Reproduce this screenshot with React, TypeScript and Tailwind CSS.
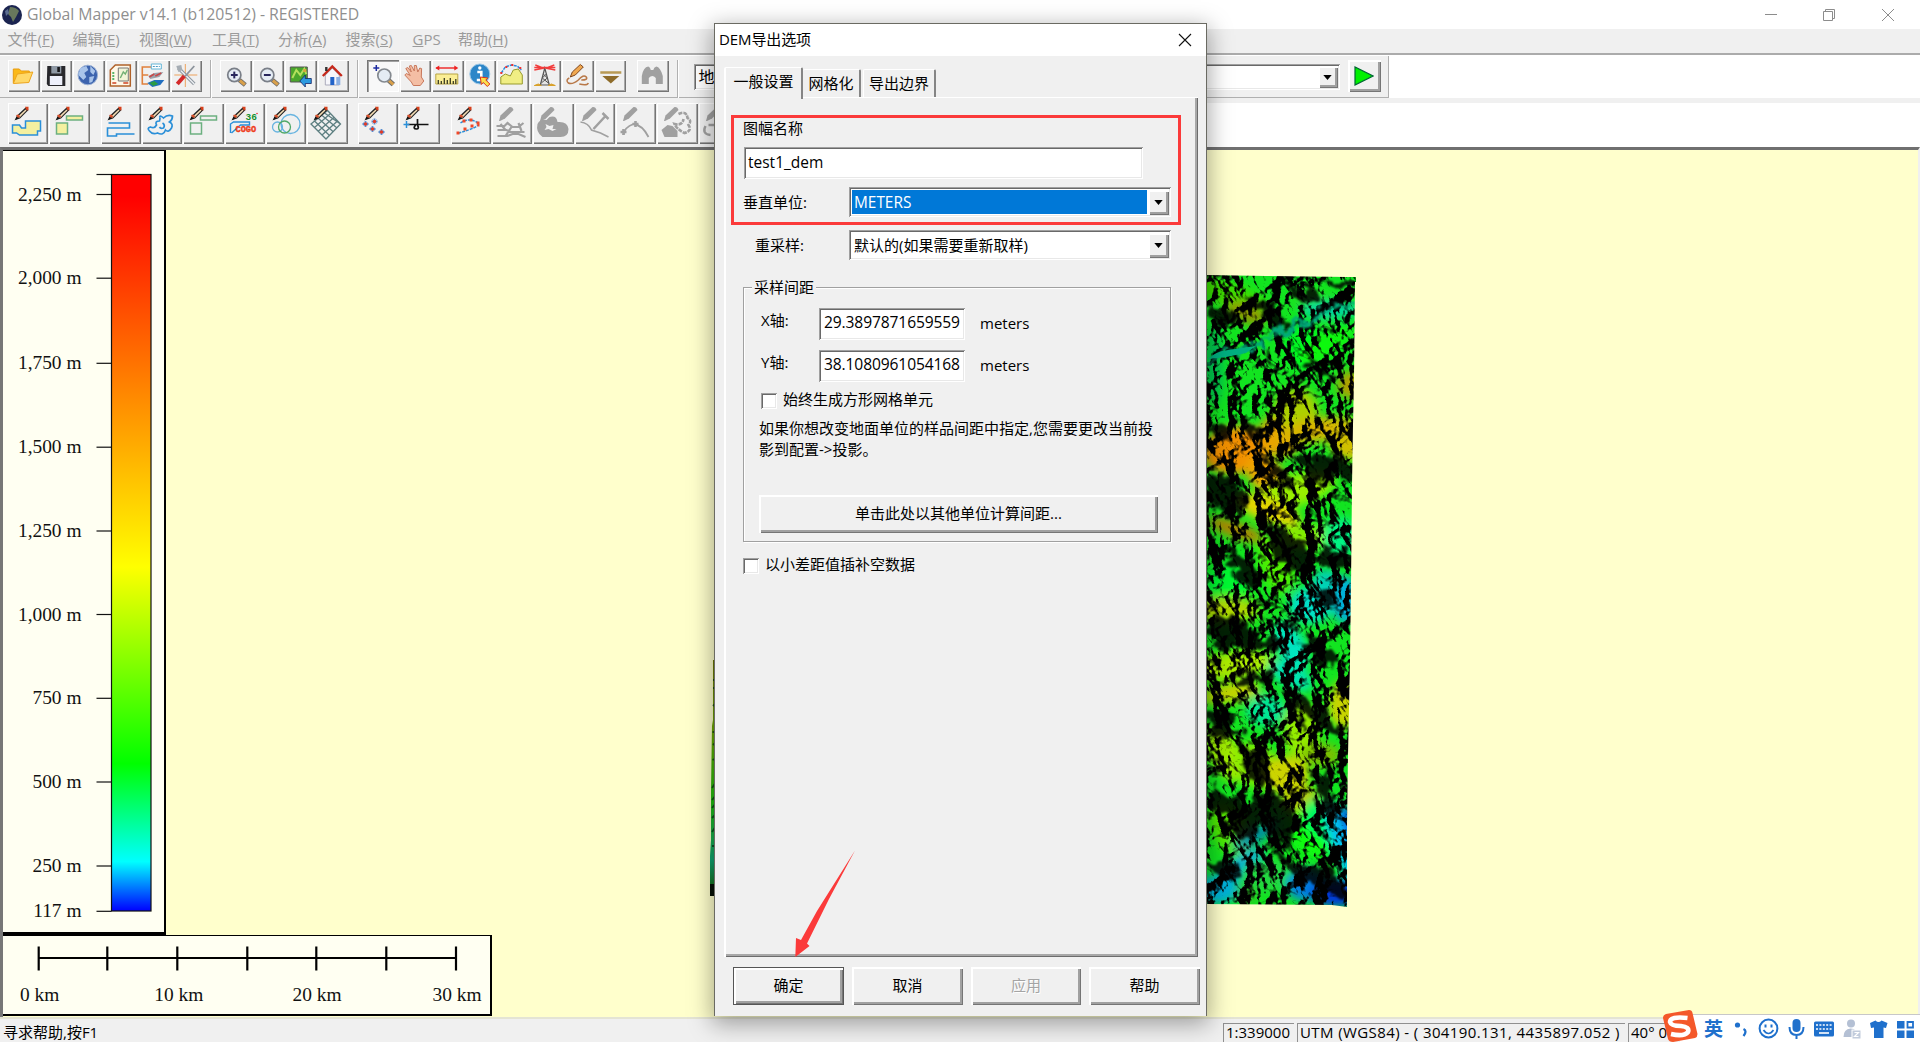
import React from "react";

const UI = "font-['Open_Sans','Noto_Sans_CJK_SC',sans-serif]";
const BTN =
  "bg-[#f0f0f0] shadow-[inset_2px_2px_0_#fff,inset_-1px_-1px_0_#757575,inset_-3px_-3px_0_#a0a0a0]";
const SUNK =
  "bg-white shadow-[inset_1px_1px_0_#a0a0a0,inset_-1px_-1px_0_#fff,inset_2px_2px_0_#696969,inset_-2px_-2px_0_#e8e8e8]";

function Tool({ children, pressed }: { children: React.ReactNode; pressed?: boolean }) {
  return (
    <div
      className={
        pressed
          ? "h-8 w-[31.5px] shrink-0 bg-[#f8f8f8] shadow-[inset_1px_1px_0_#757575,inset_2px_2px_0_#a0a0a0,inset_-1px_-1px_0_#fff]"
          : "h-8 w-[31.5px] shrink-0 bg-[#f0f0f0] shadow-[inset_1px_1px_0_#fff,inset_-1px_-1px_0_#757575,inset_-2px_-2px_0_#a8a8a8]"
      }
    >
      <svg viewBox="0.700 0 32 32" className="block h-8 w-8" fill="none">
        {children}
      </svg>
    </div>
  );
}

function Draw({ children }: { children: React.ReactNode }) {
  return (
    <div className="h-[41px] w-[40.4px] shrink-0 bg-[#f0f0f0] shadow-[inset_1px_1px_0_#fff,inset_-1px_-1px_0_#757575,inset_-2px_-2px_0_#a8a8a8]">
      <svg viewBox="0.500 0 41 41" className="block h-[41px] w-[41px]" fill="none">
        {children}
      </svg>
    </div>
  );
}

const Pencil = () => (
  <g>
    <path d="M8 17 L9.5 12.5 L18 4.5 L21 7 L12.5 15.5 Z" fill="#222" />
    <path d="M10.5 13.5 L18 6.5 L19 7.5 L11.8 14.7 Z" fill="#f4dcb4" />
    <path d="M17.5 3.8 h3.5 v3.5 h-2 z" fill="#d6401c" />
    <path d="M8.6 12 l2.6 -.6 l1.6 2.6 l-2.8 1z" fill="#d6502c" />
    <path d="M7 17.5 L9 13.5 L10.8 15.2Z" fill="#111" />
  </g>
);
const GrayPencil = () => (
  <path d="M7.5 18 L9 12.5 L18 4 Q21 3.5 22 7 L13.5 15.5 L8.5 18Z" fill="#a0a0a0" />
);

function Lens({ sign }: { sign: string }) {
  return (
    <>
      <path d="M20 20 L26 25" stroke="#6b6b6b" strokeWidth="4.6" />
      <path d="M20.5 20.5 L25.5 24.6" stroke="#d9a04a" strokeWidth="3" />
      <circle cx="15" cy="15" r="6.6" fill="#e4ecf4" stroke="#7a7f88" strokeWidth="1.7" />
      <path d="M11.6 15 h6.8" stroke="#26265c" strokeWidth="2" />
      {sign === "+" && <path d="M15 11.6 v6.8" stroke="#26265c" strokeWidth="2" />}
    </>
  );
}

function Toolbar() {
  return (
    <div className="flex h-[42px] w-[1389px] border-b border-r border-[#b0b0b0] bg-[#f0f0f0] pt-[4px]">
      <div className="flex gap-[1px] pl-2">
        <Tool>
          <path d="M6 23 V9 h6 l2 2 h8 v3" fill="#fbb917" stroke="#e79b10" />
          <path d="M6 23.5 L10 14 L25.5 12 L21.5 22.5Z" fill="#ffd868" stroke="#eda41c" />
        </Tool>
        <Tool>
          <path d="M7 6 h18 v20 h-17 l-1.5 -2z" fill="#28282c" />
          <path d="M11 6 h10 v7.5 h-10z" fill="#8e98a4" />
          <path d="M17 7 h2.6 v5 h-2.6z" fill="#16161a" />
          <path d="M9.5 16 h12.5 v9 h-12.5z" fill="#eef0fb" />
        </Tool>
        <Tool>
          <circle cx="15.5" cy="15" r="9.8" fill="#3c63ae" stroke="#9ab0d4" />
          <path d="M8 8 l6 -2 l2 4 l-4 3 l2 4 l-3 3 l-5 -5z M18 6 l5 5 l-2 4 l-3 -3z M17 17 l5 -1 l-2 6 l-3 1z" fill="#a9c4ea" />
        </Tool>
        <Tool>
          <path d="M5 10 L10 5 H25 V26 H5Z" fill="#fff8e8" stroke="#b0622a" strokeWidth="1.5" />
          <path d="M13 8 h10 v13 h-10z" fill="#f2f5d8" stroke="#777" />
          <path d="M15 18 l3 -6 l2 2 l2 -4" stroke="#73b074" strokeWidth="1.4" />
          <path d="M7 13 h2 M7 16 h2 M7 19 h2" stroke="#22a040" strokeWidth="1.6" />
          <path d="M7 23 h4 M18 23 h5" stroke="#cf4020" strokeWidth="1.3" />
        </Tool>
        <Tool>
          <path d="M16 7 H5 V24 H11 M5 15 H11" stroke="#e0803c" strokeWidth="1.6" />
          <path d="M14 4 h10 v5 h-10z" fill="#fff" stroke="#63b6d8" />
          <path d="M15.500 6.500 h7" stroke="#4a9ac4" strokeDasharray="2 1" />
          <path d="M11 16 l6 -3 l9 -1 l-4 5 l-9 2z" fill="#9aa4ac" />
          <path d="M12 17 l5 -3 M18 16 l6 -3" stroke="#c84848" strokeWidth="1.6" />
          <path d="M10 23 l7 -3 l10 0 l-4 5 l-8 2z" fill="#216fc0" />
          <path d="M12 23 l5 -2 l4 3 l-5 2z" fill="#2c9c44" />
        </Tool>
        <Tool>
          <path d="M15 4 v23 M4 15 h23" stroke="#eda25c" />
          <path d="M8 8 L24 24" stroke="#8f979f" strokeWidth="3.4" />
          <path d="M9 9 L24 24" stroke="#eef1f4" strokeWidth="1.3" />
          <path d="M24 6 L15 16" stroke="#8d949c" strokeWidth="1.8" />
          <path d="M14 16 L7 24" stroke="#d42a2a" strokeWidth="4" />
          <path d="M6 6 l5 -1 l1 5 l-4 2z" fill="#a6adb4" />
        </Tool>
      </div>
      <div className="ml-[8px] h-[38px] w-[2px] border-l border-[#b0b0b0] bg-white" />
      <div className="flex gap-[1px] pl-[8px]">
        <Tool><Lens sign="+" /></Tool>
        <Tool><Lens sign="-" /></Tool>
        <Tool>
          <path d="M6 7 h17 v15 h-17z" fill="#4aa62c" stroke="#555" />
          <path d="M8 18 l4 -8 l4 5 l4 -6 l2 5" stroke="#b4e05c" strokeWidth="2" />
          <path d="M19 9 h3 v3 h-3z" fill="#d8a43c" />
          <path d="M15.500 21 L21 15 V18.500 H27 V23.500 H21 V27Z" fill="#2c9ae0" stroke="#126" strokeWidth=".8" />
        </Tool>
        <Tool>
          <path d="M8 15 v10 h14 v-10 l-7 -7z" fill="#f6f6fb" stroke="#aab" />
          <path d="M13 17 h4 v8 h-4z" fill="#2263c8" />
          <path d="M5.500 16 L15 6.500 L24.500 16" stroke="#c5291c" strokeWidth="2.4" />
          <path d="M9 7 v4" stroke="#333" strokeWidth="2.400" />
          <path d="M19 17 v8 h4 v-8z" fill="#8cb0e4" />
        </Tool>
      </div>
      <div className="ml-[8px] h-[38px] w-[2px] border-l border-[#b0b0b0] bg-white" />
      <div className="flex gap-[1px] pl-[8px]">
        <Tool pressed>
          <path d="M22 20 L27 24.500" stroke="#6b6b6b" strokeWidth="5" />
          <path d="M22 20 L27 24.500" stroke="#d9a04a" strokeWidth="3" />
          <circle cx="18" cy="15.500" r="6.500" fill="#e4ecf4" stroke="#84898f" strokeWidth="1.700" />
          <path d="M7 8 h6 M10 5 v6" stroke="#1c2aa0" strokeWidth="1.500" />
        </Tool>
        <Tool>
          <path d="M12 22 L5.500 15 l1.500 -1.500 l4 2 L6.500 8.500 l2 -1 L12 12 L10 6 l2 -.5 L15 11 V5.500 l2 0 L18.500 12 l2 -4 l1.800 .6 L22 17 l2.500 4 L21 25.500 h-7z" fill="#f4bea4" stroke="#c8785c" />
        </Tool>
        <Tool>
          <path d="M5 8 h20" stroke="#ee2222" strokeWidth="1.400" />
          <path d="M4 8 l4 -2.500 v5z M27 8 l-4 -2.500 v5z" fill="#e22" />
          <path d="M4.500 14 h22 v10 h-22z" fill="#fbee94" stroke="#b8a444" />
          <path d="M7 24 v-4 M10 24 v-3 M13 24 v-6 M16 24 v-4 M19 24 v-6 M22 24 v-3 M24.500 24 v-5" stroke="#3a3a22" strokeWidth="1.300" />
        </Tool>
        <Tool>
          <circle cx="15.500" cy="14" r="10" fill="#2d86c8" stroke="#9ac6e6" />
          <path d="M13 12 h4 v8 M12.500 20 h5" stroke="#fff" strokeWidth="2.600" />
          <circle cx="15.500" cy="8" r="1.700" fill="#fff" />
          <path d="M16 17 l7.500 1 l-2 2 l4 4 l-2.500 2.500 l-4 -4 l-2 2z" fill="#fbe04c" stroke="#e03018" />
        </Tool>
        <Tool>
          <path d="M4.500 24 V17 L9 14 L14 16 L17 10 L22 9 L26 15 V24Z" fill="#f0ee84" stroke="#989a2c" />
          <path d="M5 13 L9 7 L15 5 L21 6 L25 10" stroke="#2a8ce0" strokeWidth="1.500" strokeDasharray="3 1" />
          <path d="M4 13 h2 M9 7 h2 M15 5 h2 M23 8 h2" stroke="#e33" strokeWidth="2" />
        </Tool>
        <Tool>
          <path d="M15.500 8 L11 25 H20Z" fill="#e4e4e4" stroke="#555" strokeWidth="1.200" />
          <path d="M14 14 l4 4 l-6 5 M17 14 l-4 4 l6 5" stroke="#555" />
          <path d="M6 5 l9 3.500 M5 10 l10 -2 M25 5 l-9 3.500 M26 10 l-10 -2 M5 7.500 h21" stroke="#f23c3c" strokeWidth="1.400" />
          <path d="M5 25.500 l4 -1.500 l3 1.500z M19 25.500 l3 -1.500 l4 1.500z" fill="#d8a028" stroke="#d8a028" />
        </Tool>
        <Tool>
          <path d="M9 17 L11 12 L19 4.500 L22 7 L14 15Z" fill="#f0a850" stroke="#804820" />
          <path d="M8 18 Q4 20 7 23 Q11 25 17 20 Q22 14 25 17 Q27 20 20 20 M18 24 Q26 26 27 23" stroke="#b87848" strokeWidth="1.500" />
        </Tool>
        <Tool>
          <path d="M6 12.500 h21" stroke="#b89a54" strokeWidth="2.500" />
          <path d="M8 16 h17 L16.500 23.500Z" fill="#8e6c2a" />
        </Tool>
      </div>
      <div className="pl-[11px]">
        <Tool>
          <path d="M5.500 24 V16 Q7 7 12 6.500 Q14 7 14.500 10 H17 Q17.500 7 20 6.500 Q24 7 26.500 16 V24 H19.500 V18 Q16 14 12.500 18 V24Z" fill="#a0a0a0" />
        </Tool>
      </div>
      <div className="ml-[8px] h-[38px] w-[2px] border-l border-[#b0b0b0] bg-white" />
      <div className={"ml-[15px] mt-[4px] flex h-[26px] w-[646px] items-center justify-between p-[2px] " + SUNK}>
        <span className={"pl-[3px] text-[16px] leading-none " + UI}>地图</span>
        <div className={"flex h-[22px] w-[20px] items-center justify-center " + BTN}>
          <svg viewBox="0 0 10 6" className="h-[5px] w-[9px]"><path d="M0 0H10L5 6Z" fill="#000" /></svg>
        </div>
      </div>
      <div className={"ml-[8px] flex h-8 w-[33px] items-center justify-center " + BTN}>
        <svg viewBox="0 0 20 20" className="mt-[-1px] h-5 w-5">
          <path d="M1 1 V19 L19 10Z" fill="#00f000" stroke="#063" strokeWidth="1.2" />
        </svg>
      </div>
    </div>
  );
}

const BLUE = "#2a8fd8";
const NODES = [[8, 21], [17, 18.5], [15, 26], [24, 29]];
function DrawBar() {
  return (
    <div className="flex h-[49px] bg-[#f0f0f0] pt-[5px]">
      <div className="flex w-[92.500px] shrink-0 gap-[1px] pl-2">
        <Draw>
          <path d="M5 22 h7 l2 3 h4 v-7 h15 v10 h-3 v4 h-18 l-3 -2 h-4z" fill="#f4f0a0" stroke={BLUE} strokeWidth="1.500" />
          <Pencil />
        </Draw>
        <Draw>
          <path d="M18 13 h16 v4 h-16z M8 20 h11 v11 h-11z" fill="#f4f0a0" stroke="#6cb080" strokeWidth="1.500" />
          <Pencil />
        </Draw>
      </div>
      <div className="flex w-[257.500px] shrink-0 gap-[1px] pl-2">
        <Draw>
          <path d="M8 20 h21 v5 h-22 v8 h9 v-2 h18" stroke={BLUE} strokeWidth="1.600" />
          <Pencil />
        </Draw>
        <Draw>
          <path d="M18 14 q1 -2 4 1 q4 -4 9 -2 q0 4 -3 6 q4 2 2 6 q-3 5 -6 2 q-2 6 -8 3 q-5 2 -8 -2 q-3 -3 1 -4 q4 2 6 -2 q-2 -4 3 -4 q1 -3 0 -4 M21 20 q3 2 1 5 q-3 1 -4 -1" stroke={BLUE} strokeWidth="1.700" />
          <Pencil />
        </Draw>
        <Draw>
          <path d="M18 13 h16 v4 h-16z M8 20 h11 v11 h-11z" stroke="#6cb080" strokeWidth="1.500" />
          <Pencil />
        </Draw>
        <Draw>
          <path d="M6 30 v-9 l3 -2 h16 v3 h-9 l-9 8" stroke={BLUE} strokeWidth="1.400" />
          <text x="21" y="17" fontSize="9.500" fontWeight="bold" fontFamily="Liberation Mono, monospace" fill="#14902c">36</text>
          <circle cx="32.500" cy="10.500" r=".8" fill="#e33" />
          <text x="11" y="29" fontSize="8.600" fontWeight="bold" fontFamily="Liberation Mono, monospace" fill="#ee3c1c" stroke="#ee3c1c" strokeWidth=".4">COGO</text>
          <Pencil />
        </Draw>
        <Draw>
          <circle cx="25" cy="21" r="9.500" stroke="#68b4e0" strokeWidth="1.300" />
          <circle cx="12" cy="24" r="5" stroke="#68b4e0" strokeWidth="1.300" />
          <circle cx="19" cy="24" r="6" stroke="#50a868" strokeWidth="1.300" />
          <Pencil />
        </Draw>
        <Draw>
          <path d="M4.500 21 L21 7.500 L34 21 L19.500 36Z M8 18 L23 32.500 M11.500 15 L27 29 M15 12 L30.500 25 M18 10 L34 21 M8 24.500 L24 10.500 M12 28 L28 14 M15.500 32 L31 18" stroke="#5c7e80" strokeWidth="1.300" />
          <Pencil />
        </Draw>
      </div>
      <div className="flex w-[92.500px] shrink-0 gap-[1px] pl-2">
        <Draw>
          {NODES.map(([x, y]) => (
            <g key={x}>
              <path d={`M${x - 3} ${y} h6 M${x} ${y - 3} v6`} stroke="#5a8ed0" strokeWidth="1.800" />
              <path d={`M${x - 2} ${y - 2} l4 4 M${x + 2} ${y - 2} l-4 4`} stroke="#7aa4dc" strokeWidth="1" />
              <circle cx={x} cy={y} r="1.700" fill="#e03c28" />
            </g>
          ))}
          <Pencil />
        </Draw>
        <Draw>
          <path d="M9 21.500 h21 M19 16 v6 q2 4 -1 4 q-4 0 -1 -4" stroke="#111" strokeWidth="1.700" />
          <path d="M5 21.500 h6 M8 18 v7" stroke={BLUE} strokeWidth="1.500" />
          <Pencil />
        </Draw>
      </div>
      <div className="flex w-[300px] shrink-0 gap-[1px] pl-2">
        <Draw>
          <path d="M10 20 q8 -6 18 0 q2 4 -20 10" stroke={BLUE} strokeWidth="1.500" strokeDasharray="3 1" />
          <path d="M12 18 h3 M19 17 h3 M26 20 h3 M20 23 h3 M13 26 h3 M6 30 h3 M27 22 h2" stroke="#f04828" strokeWidth="3" />
          <Pencil />
        </Draw>
        <Draw>
          <path d="M5 23 h8 l3 -3 l5 4 h6 l5 -4 M6 27 h9 l4 2 h14 M6 33 h10 l5 -2 h6 l7 3 M9 21 l5 6 M27 20 l3 8 M20 24 l-6 9" stroke="#a0a0a0" strokeWidth="2.200" />
          <GrayPencil />
        </Draw>
        <Draw>
          <path d="M5 21 Q8 15 14 17 L17 14 Q24 12 25 19 Q35 18 36 26 Q36 34 28 34 H10 Q3 29 5 21Z" fill="#a0a0a0" />
          <path d="M12 27 l2 -3 l-1 -3 l4 2 l4 -1 l-1 4 h4 l-4 2 l-4 -2z" fill="#f0f0f0" />
          <GrayPencil />
        </Draw>
        <Draw>
          <path d="M6 19 q8 1 11 8 l9 3 l8 4" stroke="#a0a0a0" strokeWidth="1.600" />
          <path d="M19 26 L31 13 M28 10 l6 6" stroke="#a0a0a0" strokeWidth="2.500" />
          <GrayPencil />
        </Draw>
        <Draw>
          <path d="M8 32 q1 -8 10 -11 q9 1 15 13" stroke="#a0a0a0" strokeWidth="1.800" />
          <path d="M5 29 h6 M17 21 h6 M20 18 v6 M8 26 v6" stroke="#a0a0a0" strokeWidth="2.600" />
          <GrayPencil />
        </Draw>
        <Draw>
          <path d="M5 27 l6 -5 l5 1 l5 5 v6 h-13z" fill="#a0a0a0" />
          <path d="M22 11 q8 -4 9 4 q5 3 1 7 q4 6 -4 8 q-8 -4 -10 -9 q8 2 9 -5" stroke="#a0a0a0" strokeWidth="2.600" strokeDasharray="4 1" />
          <GrayPencil />
        </Draw>
        <Draw>
          <path d="M7 23 q-4 8 5 9 M10 22 h9 q6 7 -2 10" stroke="#a0a0a0" strokeWidth="2.400" />
          <GrayPencil />
        </Draw>
      </div>
      <div className="grow bg-white" />
    </div>
  );
}

const LABELS: [string, number][] = [
  ["2,250 m", 194.5], ["2,000 m", 278.2], ["1,750 m", 363.3], ["1,500 m", 447.2],
  ["1,250 m", 531], ["1,000 m", 614.5], ["750 m", 698.3], ["500 m", 782], ["250 m", 866], ["117 m", 911.3],
];

function Legend() {
  return (
    <div className="h-[785px] w-[163px] border-b-[3px] border-r-[2px] border-t border-black bg-[#fffff2]">
      <svg viewBox="3 151 161 781" className="block h-[781px] w-[161px]">
        <defs>
          <linearGradient id="elev" x1="0" y1="0" x2="0" y2="1">
            <stop offset="0" stopColor="#f00" />
            <stop offset=".03" stopColor="#f00" />
            <stop offset=".533" stopColor="#ff0" />
            <stop offset=".8" stopColor="#0f0" />
            <stop offset=".933" stopColor="#0ff" />
            <stop offset="1" stopColor="#00f" />
          </linearGradient>
        </defs>
        <rect x="111.500" y="174.500" width="39.500" height="736.500" fill="url(#elev)" stroke="#111" strokeWidth="1.200" />
        <path d="M96.500 174.500 h15" stroke="#111" strokeWidth="1.200" />
        {LABELS.map(([t, y]) => (
          <g key={t}>
            <path d={`M96.500 ${y} h15`} stroke="#111" strokeWidth="1.200" />
            <text x="81.500" y={y + 6} textAnchor="end" fontSize="19.400" fontFamily="Liberation Serif, serif" fill="#111">{t}</text>
          </g>
        ))}
      </svg>
    </div>
  );
}

function ScaleBar() {
  return (
    <div className="h-[81px] w-[489px] border-b-[2px] border-r-[2px] border-t border-black bg-[#fffff2]">
      <svg viewBox="3 936 487 78" className="block h-[78px] w-[487px]">
        <path d="M38.700 958 H457" stroke="#000" strokeWidth="2.200" />
        {[38.7, 107.3, 177.3, 247.3, 316.3, 386.3, 456].map((x) => (
          <path key={x} d={`M${x} 946.5 v24`} stroke="#000" strokeWidth="2.200" />
        ))}
        {([["0 km", 39.7], ["10 km", 178.8], ["20 km", 317], ["30 km", 457]] as [string, number][]).map(([t, x]) => (
          <text key={t} x={x} y="1000.500" textAnchor="middle" fontSize="19.400" fontFamily="Liberation Serif, serif" fill="#111">{t}</text>
        ))}
      </svg>
    </div>
  );
}

type Blob = [number, number, number, number, number, string];
const TINTS: Blob[] = [
  [25, 20, 40, 12, 20, "#3cdc00"], [40, 38, 22, 10, 20, "#8c9a00"], [110, 30, 26, 14, 25, "#20e020"],
  [125, 35, 30, 8, 0, "#00d8a0"], [95, 70, 18, 24, 0, "#00f820"], [120, 70, 12, 30, 60, "#10f810"],
  [8, 90, 10, 40, 0, "#00c850"],
  [30, 175, 34, 24, -8, "#f09000"], [75, 160, 22, 22, 0, "#e8a400"], [90, 135, 22, 22, 80, "#acd000"],
  [110, 155, 40, 12, -10, "#d8b400"], [145, 165, 22, 20, 0, "#d0c000"], [145, 110, 14, 14, 0, "#b0a000"],
  [60, 200, 24, 16, 45, "#f0a400"], [90, 215, 40, 16, -15, "#98f000"], [62, 235, 34, 12, 20, "#e4d400"],
  [100, 262, 26, 12, 0, "#84ec00"], [135, 262, 18, 20, 0, "#00f484"], [30, 255, 30, 8, 20, "#b08400"],
  [120, 310, 16, 16, 30, "#00d0b0"], [70, 290, 16, 30, -20, "#50f000"], [20, 310, 24, 20, 0, "#00f830"],
  [105, 330, 22, 18, 0, "#00e0c8"], [20, 335, 34, 12, 0, "#b0d800"], [140, 325, 14, 24, 0, "#00b0d8"],
  [85, 370, 14, 26, -30, "#00e4c0"], [28, 390, 40, 14, -8, "#aceC00"], [85, 400, 24, 12, 30, "#00e4b0"],
  [25, 418, 30, 10, -10, "#c4d400"], [60, 435, 20, 16, 0, "#00e494"], [95, 455, 18, 28, 0, "#94ec00"],
  [138, 430, 16, 24, 0, "#c8d400"], [20, 480, 16, 30, -30, "#a0ec00"], [50, 490, 20, 24, -30, "#84ec00"],
  [80, 500, 24, 20, 0, "#ccd400"], [115, 480, 20, 12, 0, "#7cc000"], [95, 525, 20, 14, 0, "#b4c800"],
  [110, 555, 26, 26, 0, "#10ff10"], [120, 545, 26, 18, 40, "#00f860"], [140, 575, 12, 50, -20, "#00c4f0"],
  [148, 560, 8, 34, -20, "#0050e0"], [25, 555, 18, 30, -30, "#54e800"], [30, 595, 34, 10, -35, "#00a8d8"],
  [50, 560, 26, 8, -30, "#008ca0"], [10, 615, 22, 14, 0, "#00b0d8"], [60, 600, 26, 16, 0, "#20d840"],
  [100, 610, 20, 16, 0, "#0080e0"], [130, 618, 26, 14, 0, "#0038d8"], [40, 620, 10, 10, 0, "#30c020"],
];

const SHADE = [
  "M40 22 L66 30 L84 46 L70 52 L56 40Z", "M70 5 L100 12 L118 26 L100 30 L82 18Z", "M118 2 H150 V14 L130 12Z",
  "M0 30 L22 34 L34 46 L10 52Z", "M96 72 L110 86 L130 106 L124 110 L104 92Z", "M60 72 L66 76 L68 96 L60 90Z",
  "M0 145 L18 152 L26 162 L10 165Z", "M34 140 L56 160 L54 170 L40 160Z", "M84 176 L104 184 L120 180 L148 186 L146 206 L120 202 L112 210 L100 196Z",
  "M60 184 L68 184 L80 204 L92 218 L78 216 L64 202Z", "M0 200 L28 202 L44 222 L46 236 L20 238 L6 228Z",
  "M62 244 L80 254 L92 270 L110 278 L136 270 L146 280 L140 296 L120 286 L84 296 L70 284 L64 262Z",
  "M20 268 L40 278 L56 300 L60 314 L40 312 L24 298Z", "M2 345 L30 342 L50 356 L66 366 L84 366 L70 374 L10 372Z",
  "M54 342 L80 350 L94 344 L90 352 L74 352Z", "M94 366 L118 362 L128 380 L120 394 L100 380Z",
  "M30 402 L50 396 L74 400 L62 406 L30 412Z", "M80 414 L104 420 L126 446 L150 462 L118 456 L96 436 L100 460 L90 436Z",
  "M0 430 L20 434 L34 460 L20 464 L4 460Z", "M32 462 L56 480 L70 510 L56 512 L38 494Z",
  "M2 512 L20 520 L46 524 L60 516 L84 530 L90 550 L84 574 L70 560 L50 552 L44 570 L30 560 L16 540Z",
  "M66 570 L90 588 L120 594 L140 612 L142 628 L120 612 L94 604 L78 590Z", "M0 590 L20 584 L34 600 L20 606Z",
  "M104 496 L124 494 L126 526 L136 550 L118 534Z", "M110 320 L124 318 L134 330 L122 334Z",
];

function Terrain() {
  return (
    <svg viewBox="0 0 151 632" className="absolute left-[1206px] top-[275px] h-[632px] w-[151px]">
      <defs>
        <clipPath id="edge">
          <path d="M0 0 L60 1 L141 2 H150 V7 H149 L148 102 L147 150 L146 210 L145 310 L144 385 L142 480 L141 550 L141 632 L126 630 L0 629Z" />
        </clipPath>
        <filter id="soft" x="-30%" y="-30%" width="160%" height="160%"><feGaussianBlur stdDeviation="5" /></filter>
        <filter id="rough" x="-10%" y="-10%" width="120%" height="120%">
          <feTurbulence type="fractalNoise" baseFrequency=".08" numOctaves="3" seed="8" result="n" />
          <feDisplacementMap in="SourceGraphic" in2="n" scale="26" xChannelSelector="R" yChannelSelector="G" />
          <feGaussianBlur stdDeviation=".8" />
        </filter>
        <filter id="relief" x="0" y="0" width="100%" height="100%" colorInterpolationFilters="sRGB">
          <feTurbulence type="turbulence" baseFrequency=".022 .034" numOctaves="4" seed="5" result="n" />
          <feColorMatrix in="n" type="matrix" values="0 0 0 0 0  0 0 0 0 0  0 0 0 0 0  -1.1 -.5 0 0 1" />
          <feGaussianBlur stdDeviation=".5" />
          <feDiffuseLighting surfaceScale="17" diffuseConstant="1.2" lightingColor="#fff">
            <feDistantLight azimuth="150" elevation="42" />
          </feDiffuseLighting>
          <feComponentTransfer>
            <feFuncR type="linear" slope="1.5" intercept="-.2" />
            <feFuncG type="linear" slope="1.5" intercept="-.2" />
            <feFuncB type="linear" slope="1.5" intercept="-.2" />
          </feComponentTransfer>
        </filter>
      </defs>
      <g clipPath="url(#edge)">
        <rect width="151" height="632" fill="#12e420" />
        <g filter="url(#soft)">
          {TINTS.map(([x, y, rx, ry, a, c], i) => (
            <ellipse key={i} cx={x} cy={y} rx={rx} ry={ry} fill={c} transform={`rotate(${a} ${x} ${y})`} />
          ))}
        </g>
        <g className="mix-blend-multiply">
          <g transform="rotate(55 75 316)">
            <rect x="-270" y="-40" width="700" height="720" filter="url(#relief)" />
          </g>
        </g>
        <g filter="url(#rough)" fill="#000" opacity=".85">
          {SHADE.map((d) => <path key={d} d={d} />)}
        </g>
        <path d="M2 90 Q4 78 22 76 L50 72 L66 62 L92 46 L60 56 L104 48 L118 38 L124 32 L148 32" fill="none" stroke="#00a878" strokeWidth="4" strokeLinejoin="round" filter="url(#rough)" />
        <path d="M2 84 Q10 76 22 75 L50 71 L40 78 L20 82Z" fill="#00b080" />
      </g>
    </svg>
  );
}

function TerrainSliver() {
  return (
    <svg viewBox="0 0 6 236" className="absolute left-[710px] top-[660px] h-[236px] w-[6px]">
      <defs>
        <linearGradient id="sl" x1="0" y1="0" x2="0" y2="1">
          <stop offset="0" stopColor="#6a7400" /><stop offset=".3" stopColor="#6aa800" />
          <stop offset=".6" stopColor="#20c010" /><stop offset=".85" stopColor="#10a470" /><stop offset="1" stopColor="#186000" />
        </linearGradient>
      </defs>
      <path d="M3 0 H6 V236 H0 V196 L1 180 V130 L2 66 L3 60Z" fill="url(#sl)" />
      <path d="M3 20h3M3 28h3M3 46l3-3M2.500 72h4M3 85l4-4M2.500 100l4-2M2 128l4-6M2 140l4-5M2 148l4-5M2 158l4-4M2 172l4-6M2 186h4" stroke="#031" strokeWidth="1.800" opacity=".7" />
      <path d="M0 224h6v12h-6z" fill="#051005" />
    </svg>
  );
}

function Select({ text, selected }: { text: string; selected?: boolean }) {
  return (
    <div className={"flex h-[30px] w-[322px] items-center p-[3px] pr-[2px] " + SUNK}>
      <div className={selected ? "flex h-6 grow items-center bg-[#0078d7] pl-[2px] pt-[1px] text-[15.400px] text-white" : "flex h-6 grow items-center pl-[2px] text-[15px]"}>
        {text}
      </div>
      <div className={"ml-[1px] flex h-[25px] w-[21px] items-center justify-center " + BTN}>
        <svg viewBox="0 0 10 6" className="h-[5px] w-[9px]"><path d="M0 0H10L5 6Z" fill="#000" /></svg>
      </div>
    </div>
  );
}

function Axis({ name, value }: { name: string; value: string }) {
  return (
    <div className="flex h-8">
      <span className="w-[58px] leading-6">{name}</span>
      <div className={"w-[146px] pl-[5px] pt-[2px] text-[15.600px] leading-6 tracking-[-0.120px] " + SUNK}>{value}</div>
      <span className="pl-[15px] pt-[3px] leading-6">meters</span>
    </div>
  );
}

function Check({ label }: { label: string }) {
  return (
    <div className="flex h-[18px] items-center">
      <div className={"h-4 w-4 " + SUNK} />
      <span className="-mt-[3px] pl-[6px] leading-none">{label}</span>
    </div>
  );
}

function Dialog() {
  return (
    <div className={"absolute left-[714px] top-[23px] flex h-[993px] w-[493px] flex-col border border-b-0 border-[#6a6a62] bg-[#f0f0f0] text-[15px] text-black shadow-[0_6px_22px_2px_rgba(0,0,0,0.35)] " + UI}>
      <div className="flex h-8 items-center justify-between bg-white pl-[4px] pr-[14px]">
        <span className="-mt-[2px] tracking-[-0.100px]">DEM导出选项</span>
        <svg viewBox="0 0 14 14" className="h-[14px] w-[14px]"><path d="M1 1L13 13M13 1L1 13" stroke="#111" strokeWidth="1.100" /></svg>
      </div>
      <div className="flex h-[41px] items-end pl-[9px]">
        <div className="relative z-10 -mb-[2px] flex h-[32px] w-[79px] items-center justify-center rounded-t-[2px] border-l-2 border-r-2 border-t border-l-white border-r-[#858585] border-t-white bg-[#f0f0f0] pb-[4px]">一般设置</div>
        <div className="flex h-[28px] w-[58px] items-center justify-center rounded-t-[2px] border-r-2 border-t border-r-[#858585] border-t-white">网格化</div>
        <div className="ml-[2px] flex h-[28px] w-[73px] items-center justify-center rounded-t-[2px] border-l border-r-2 border-t border-l-white border-r-[#858585] border-t-white">导出边界</div>
      </div>
      <div className="ml-[9px] h-[860px] w-[474px] bg-[#f0f0f0] pl-[7px] pt-[18px] shadow-[inset_2px_1px_0_#fff,inset_-1px_-1px_0_#6c6c6c,inset_-3px_-3px_0_#a8a8a8]">
        <div className="h-[110px] w-[450px] border-[3px] border-[#fb3a3a] pl-[10px]">
          <div className="-ml-[1px] h-[29px] leading-5">图幅名称</div>
          <div className={"flex h-8 w-[399px] items-center pl-[4px] text-[15.500px] " + SUNK}>test1_dem</div>
          <div className="mt-[8px] flex items-center">
            <span className="-ml-[1px] w-[106px]">垂直单位:</span>
            <Select text="METERS" selected />
          </div>
        </div>
        <div className="mt-[5px] flex items-center pl-[24px]">
          <span className="w-[94px]">重采样:</span>
          <Select text="默认的(如果需要重新取样)" />
        </div>
        <fieldset className="relative ml-[12px] mt-[27px] h-[255px] w-[428px] border border-[#a0a0a0] pl-[17px] pt-[20px] shadow-[1px_1px_0_#fff,inset_1px_1px_0_#fff]">
          <span className="absolute -top-[13px] left-[8px] bg-[#f0f0f0] px-[2px] leading-6">采样间距</span>
          <Axis name="X轴:" value="29.3897871659559" />
          <div className="h-[10px]" />
          <Axis name="Y轴:" value="38.1080961054168" />
          <div className="h-[9.500px]" />
          <Check label="始终生成方形网格单元" />
          <p className="-ml-[2px] mt-[8px] w-[404px] leading-[21.500px]">如果你想改变地面单位的样品间距中指定,您需要更改当前投<br />影到配置-&gt;投影。</p>
          <div className={"-ml-[2px] mt-[34px] flex h-[38px] w-[399px] items-center justify-center pb-[1px] " + BTN}>单击此处以其他单位计算间距...</div>
        </fieldset>
        <div className="ml-[12px] mt-[15px]"><Check label="以小差距值插补空数据" /></div>
      </div>
      <div className="flex gap-[8px] pl-[18px] pt-[10px]">
        <div className="h-[38px] w-[111px] border border-[#555]"><div className={"flex h-full items-center justify-center pb-[2px] " + BTN}>确定</div></div>
        <div className={"flex h-[38px] w-[111px] items-center justify-center pb-[2px] " + BTN}>取消</div>
        <div className={"flex h-[38px] w-[110px] items-center justify-center pb-[2px] text-[#a4a4a4] [text-shadow:1px_1px_0_#fff] " + BTN}>应用</div>
        <div className={"flex h-[38px] w-[111px] items-center justify-center pb-[2px] " + BTN}>帮助</div>
      </div>
      <svg viewBox="795 850 61 108" className="absolute left-[80px] top-[826px] h-[108px] w-[61px]">
        <path d="M855 850.500 L817 911 L801 940 L796 938 L795.300 957 L809.500 946 L807 943.500 L829 899Z" fill="#fb3a3a" />
      </svg>
    </div>
  );
}

function ImeBar() {
  const c = "#1f70cc";
  return (
    <div className="absolute left-[1661px] top-[1009px] h-[33px] w-[259px]">
      <div className="absolute bottom-0 left-[19px] right-0 top-[5px] border-t border-[#c8c8c8] bg-white" />
      <svg viewBox="1661 1009 259 33" className="absolute inset-0 h-[33px] w-[259px]" fill="none">
        <path d="M1666 1014 L1689 1010 Q1692 1010 1692.500 1013 L1697.500 1034 Q1697.500 1037 1695 1038 L1673 1042 Q1669 1042 1668 1039 L1663 1018 Q1663 1015 1666 1014Z" fill="#f4582a" />
        <path d="M1687.500 1018 Q1670 1016 1670 1022 Q1671 1026 1681 1026 Q1690 1027 1688 1032 Q1684 1037 1671 1034" stroke="#fff" strokeWidth="4.600" />
        <text x="1704" y="1035.500" fontSize="19" fontWeight="bold" fontFamily="Noto Sans CJK SC, sans-serif" fill={c}>英</text>
        <circle cx="1737.500" cy="1025" r="2.600" fill={c} />
        <path d="M1743.500 1029 q4 2 0 7" stroke={c} strokeWidth="2.300" />
        <circle cx="1768.500" cy="1028.500" r="8.900" stroke={c} strokeWidth="2" />
        <path d="M1763.500 1030 q5 7 10 0" stroke={c} strokeWidth="1.700" />
        <path d="M1765.500 1024.500 v3 M1771.500 1024.500 v3" stroke={c} strokeWidth="2" />
        <rect x="1792.500" y="1019" width="8" height="13" rx="4" fill={c} />
        <path d="M1789.500 1027 q0 8 7 8 q7 0 7 -8 M1796.500 1035 v4" stroke={c} strokeWidth="2" />
        <rect x="1814" y="1021.500" width="20" height="15" rx="1.500" fill={c} />
        <path d="M1816 1025 h16 M1816 1029 h16" stroke="#fff" strokeWidth="1.700" strokeDasharray="2 1.400" />
        <path d="M1819 1033 h10" stroke="#fff" strokeWidth="1.600" />
        <circle cx="1851" cy="1023.500" r="4" fill="#b4c0d4" />
        <path d="M1843.500 1037 q0 -8 7 -8.500 q7 0 8 8.500z" fill="#b4c0d4" />
        <rect x="1852" y="1030" width="9" height="9" fill="#c2ccdc" stroke="#fff" />
        <path d="M1854.500 1032.500 h4 l-4 4 h4" stroke="#fff" strokeWidth="1.200" />
        <path d="M1870 1023 L1875.500 1020.500 Q1878.500 1023.500 1881.500 1020.500 L1887.500 1023 L1886 1028 L1883.500 1027.500 V1038 H1874 V1027.500 L1871 1028Z" fill={c} />
        <path d="M1897 1021 h7.500 v7.500 h-7.500z M1897 1030.500 h7.500 v7.500 h-7.500z M1906.500 1030.500 h7.500 v7.500 h-7.500z" fill={c} />
        <path d="M1907.500 1022 h5.500 v5.500 h-5.500z" stroke={c} strokeWidth="1.800" />
      </svg>
    </div>
  );
}

const MENU: [string, string, number][] = [
  ["文件(", "F", 65], ["编辑(", "E", 66.5], ["视图(", "W", 73], ["工具(", "T", 66], ["分析(", "A", 67.5], ["搜索(", "S", 67],
];

export default function App() {
  return (
    <div className="relative flex h-[1042px] w-[1920px] flex-col overflow-hidden bg-white">
      <div className="flex h-[29px] items-center justify-between">
        <div className="flex items-center">
          <svg viewBox="0 0 20 20" className="ml-[2px] h-5 w-5">
            <circle cx="10" cy="10" r="10" fill="#1b2450" />
            <path d="M8 2 Q14 2 17 6 L14 12 L11 17 L9 12 L6 9Z" fill="#68785c" />
            <path d="M3 6 l3 -2 l1 4 l-3 3z" fill="#5d6f92" />
          </svg>
          <span className={"pl-[5px] text-[15.800px] tracking-[-0.030px] text-[#8f8f8f] " + UI}>Global Mapper v14.1 (b120512) - REGISTERED</span>
        </div>
        <svg viewBox="1760 4 140 20" className="mr-[20px] h-5 w-[140px]" fill="none" stroke="#8c8c8c">
          <path d="M1765 13.500 h12 M1823.500 10.500 h9 v9 h-9z M1825.500 10.500 v-2 h9 v9 h-2 M1882 8 l12 12 M1894 8 l-12 12" />
        </svg>
      </div>
      <div className={"flex h-[26px] items-center border-b-2 border-[#ababab] bg-[#f0f0f0] pb-[3px] pl-[7.500px] text-[15px] text-[#9b9b9b] " + UI}>
        {MENU.map(([a, k, w]) => (
          <span key={k} style={{ width: w }} className="shrink-0 whitespace-nowrap">{a}<u>{k}</u>)</span>
        ))}
        <span className="w-[45.500px] -ml-[0px]"><u>G</u>PS</span>
        <span>帮助(<u>H</u>)</span>
      </div>
      <div className="h-[1px] bg-white" />
      <Toolbar />
      <DrawBar />
      <div className="relative flex h-[870px] flex-col border-l-[3px] border-r-2 border-t-[3px] border-l-[#777] border-r-[#f0f0f0] border-t-[#707070] bg-[#ffffcc]">
        <Legend />
        <ScaleBar />
      </div>
      <div className={"flex h-[25px] items-end border-t-2 border-[#e4e4d4] bg-[#f0f0f0] text-[15px] " + UI}>
        <span className="w-[1223px] pl-[3px] leading-5">寻求帮助,按F1</span>
        <div className="h-[19px] w-[71px] whitespace-nowrap border-l border-t border-[#909090] pl-[2px] leading-[17px]">1:339000</div>
        <div className="ml-[3px] h-[19px] w-[328px] whitespace-nowrap border-l border-t border-[#909090] pl-[2px] leading-[17px] tracking-[0.400px]">UTM (WGS84) - ( 304190.131, 4435897.052 )</div>
        <div className="ml-[3px] h-[19px] grow border-l border-t border-[#909090] pl-[2px] leading-[17px]">40° 0</div>
      </div>
      <Terrain />
      <TerrainSliver />
      <Dialog />
      <ImeBar />
    </div>
  );
}
